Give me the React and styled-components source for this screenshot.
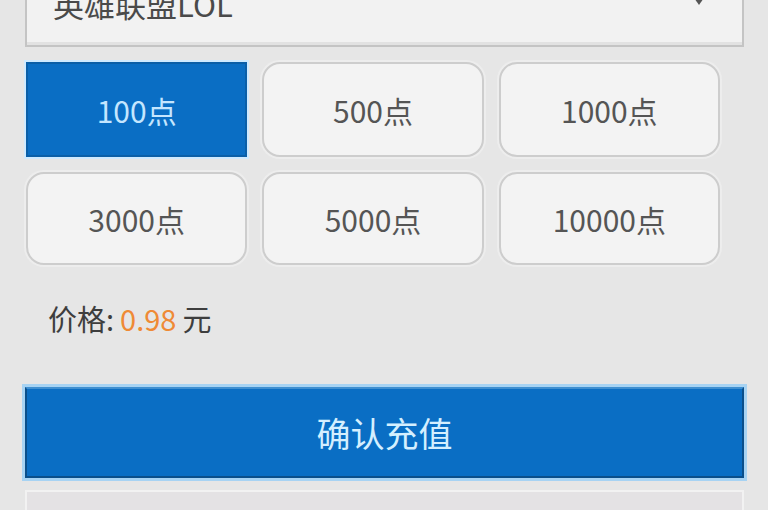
import React, { useState } from 'react';
import styled, { createGlobalStyle } from 'styled-components';

const GlobalStyle = createGlobalStyle`
  html, body {
    margin: 0;
    padding: 0;
    background: #e6e6e6;
    overflow: hidden;
  }
  body {
    font-family: "Noto Sans CJK SC", "Noto Sans", sans-serif;
  }
`;

const Page = styled.div`
  width: 768px;
  height: 510px;
  overflow: hidden;
  background: #e6e6e6;
  display: flex;
  flex-direction: column;
  & > * {
    flex-shrink: 0;
  }
`;

const Select = styled.div`
  margin: -38px 24px 0 25px;
  height: 85px;
  box-sizing: border-box;
  background: #f2f2f2;
  border: 2px solid #c4c4c4;
  border-top: none;
  box-shadow: inset 0 -3px 0 #e2e2e2;
  display: flex;
  align-items: center;
  justify-content: space-between;
  padding: 0 36px 0 26px;
  font-size: 31px;
  color: #4a4a4a;
`;

const Arrow = styled.svg`
  width: 14px;
  height: 10px;
  margin-top: -8px;
`;

const Grid = styled.div`
  margin: 15px 0 0 26px;
  width: 694px;
  display: grid;
  grid-template-columns: repeat(3, 1fr);
  gap: 15px 15px;
`;

const Option = styled.button`
  box-sizing: border-box;
  height: ${(p) => (p.$row === 0 ? 95 : 93)}px;
  font-family: inherit;
  font-size: 30px;
  padding: 0;
  cursor: pointer;
  ${(p) =>
    p.$active
      ? `
    background: #0a6ec4;
    color: #c4e6ff;
    border: 2px solid #0a5fa8;
    border-radius: 0;
    box-shadow: 0 0 0 2px #cfeaff;
  `
      : `
    background: #f3f3f3;
    color: #555;
    border: 2px solid #cdcdcd;
    border-radius: 18px;
    box-shadow: 0 0 0 2px #ededed;
  `}
`;

const Price = styled.div`
  margin: 36px 0 0 48px;
  height: 34px;
  display: flex;
  align-items: center;
  gap: 6px;
  font-size: 29px;
  color: #3e3e3e;
`;

const Amount = styled.span`
  color: #ef8a35;
`;

const Confirm = styled.button`
  box-sizing: border-box;
  margin: 52px 24px 0 25px;
  height: 91px;
  background: #0a6ec4;
  border: 2px solid #0b4f8a;
  border-top-color: #3f8fd0;
  box-shadow: 0 0 0 3px #a7d3f3;
  color: #d4efff;
  font-family: inherit;
  font-size: 34px;
  cursor: pointer;
`;

const NextBox = styled.div`
  margin: 12px 24px 0 25px;
  height: 40px;
  border: 2px solid #f2f2f2;
  border-bottom: none;
  background: #e4e2e4;
`;

const options = ['100点', '500点', '1000点', '3000点', '5000点', '10000点'];

export default function App() {
  const [active, setActive] = useState(0);
  return (
    <>
      <GlobalStyle />
      <Page>
        <Select>
          <span>英雄联盟LOL</span>
          <Arrow viewBox="0 0 14 10">
            <path d="M0 0 L14 0 L7 10 Z" fill="#555" />
          </Arrow>
        </Select>
        <Grid>
          {options.map((o, i) => (
            <Option
              key={o}
              $row={Math.floor(i / 3)}
              $active={i === active}
              onClick={() => setActive(i)}
            >
              {o}
            </Option>
          ))}
        </Grid>
        <Price>
          <span>价格:</span>
          <Amount>0.98</Amount>
          <span>元</span>
        </Price>
        <Confirm>确认充值</Confirm>
        <NextBox />
      </Page>
    </>
  );
}
